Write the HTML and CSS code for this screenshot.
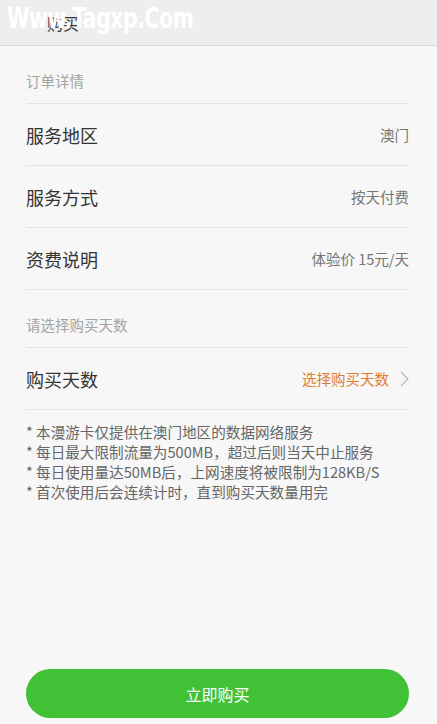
FILE: index.html
```html
<!DOCTYPE html>
<html lang="zh-CN">
<head>
    <meta charset="UTF-8">
    <meta name="viewport" content="width=device-width, initial-scale=1.0">
    <title>订单详情</title>
    <link rel="stylesheet" href="styles.css">
</head>
<body>

    <!-- Header -->
    <div class="header">
        <div class="header-title">购买</div>
        <div class="watermark">Www.Tagxp.Com</div>
    </div>

    <!-- Main Content -->
    <div class="main-content">
        <div class="section-label">订单详情</div>
        <div class="row">
            <span class="row-name">服务地区</span>
            <span class="row-value">澳门</span>
        </div>
        <div class="row">
            <span class="row-name">服务方式</span>
            <span class="row-value">按天付费</span>
        </div>
        <div class="row">
            <span class="row-name">资费说明</span>
            <span class="row-value">体验价 15元/天</span>
        </div>

        <div class="section-label">请选择购买天数</div>
        <div class="row">
            <span class="row-name">购买天数</span>
            <span class="row-value pick">选择购买天数
                <svg class="arrow" width="9" height="16" viewBox="0 0 9 16"><path d="M1 1l7 7-7 7" fill="none" stroke="#b5b5b5" stroke-width="1.2"/></svg>
            </span>
        </div>

        <ul class="notes">
            <li>* 本漫游卡仅提供在澳门地区的数据网络服务</li>
            <li>* 每日最大限制流量为500MB，超过后则当天中止服务</li>
            <li>* 每日使用量达50MB后，上网速度将被限制为128KB/S</li>
            <li>* 首次使用后会连续计时，直到购买天数量用完</li>
        </ul>

        <button class="buy-btn">立即购买</button>
    </div>

</body>
</html>
```

FILE: styles.css
```css
body {
    font-family: "Noto Sans CJK SC", "Noto Sans", sans-serif;
    margin: 0;
    padding: 0;
    background: #f7f7f7;
    width: 437px;
    height: 724px;
    display: flex;
    flex-direction: column;
    overflow: hidden;
}

/* Header */
.header {
    position: relative;
    height: 45px;
    flex-shrink: 0;
    background: #eeeeee;
    border-bottom: 1px solid #dcdcdc;
    display: flex;
    align-items: center;
    padding-left: 47px;
}
.header-title {
    font-size: 16px;
    color: #333;
}
.watermark {
    position: absolute;
    left: 7px;
    top: 0;
    font-family: "DejaVu Sans", sans-serif;
    font-weight: bold;
    font-size: 29px;
    line-height: 36px;
    color: #fff;
    letter-spacing: -0.5px;
    transform: scaleX(0.7);
    transform-origin: left center;
}

/* Main Content */
.main-content {
    flex: 1;
    display: flex;
    flex-direction: column;
    padding: 0 28px 6px 26px;
}
.section-label {
    height: 57px;
    line-height: 16px;
    display: flex;
    align-items: flex-end;
    padding-bottom: 14px;
    box-sizing: border-box;
    font-size: 14.5px;
    color: #a3a3a3;
    border-bottom: 1px solid #e4e4e4;
    margin-top: 1px;
}
.section-label:first-child {
    height: 58px;
    margin-top: 0;
}
.row {
    height: 61px;
    display: flex;
    justify-content: space-between;
    align-items: center;
    border-bottom: 1px solid #e4e4e4;
}
.row-name {
    font-size: 18px;
    color: #333;
}
.row-value {
    font-size: 14.5px;
    color: #777;
    display: flex;
    align-items: center;
}
.row-value.pick {
    color: #df7d32;
}
.arrow {
    margin-left: 11px;
}

/* Notes */
.notes {
    list-style: none;
    margin: 12px 0 0;
    padding: 0;
    font-size: 14.6px;
    line-height: 20px;
    color: #666;
}

.buy-btn {
    margin-top: auto;
    height: 49px;
    width: 100%;
    border: none;
    border-radius: 25px;
    background: #40c136;
    color: #fff;
    font-family: inherit;
    font-size: 16px;
}
```
